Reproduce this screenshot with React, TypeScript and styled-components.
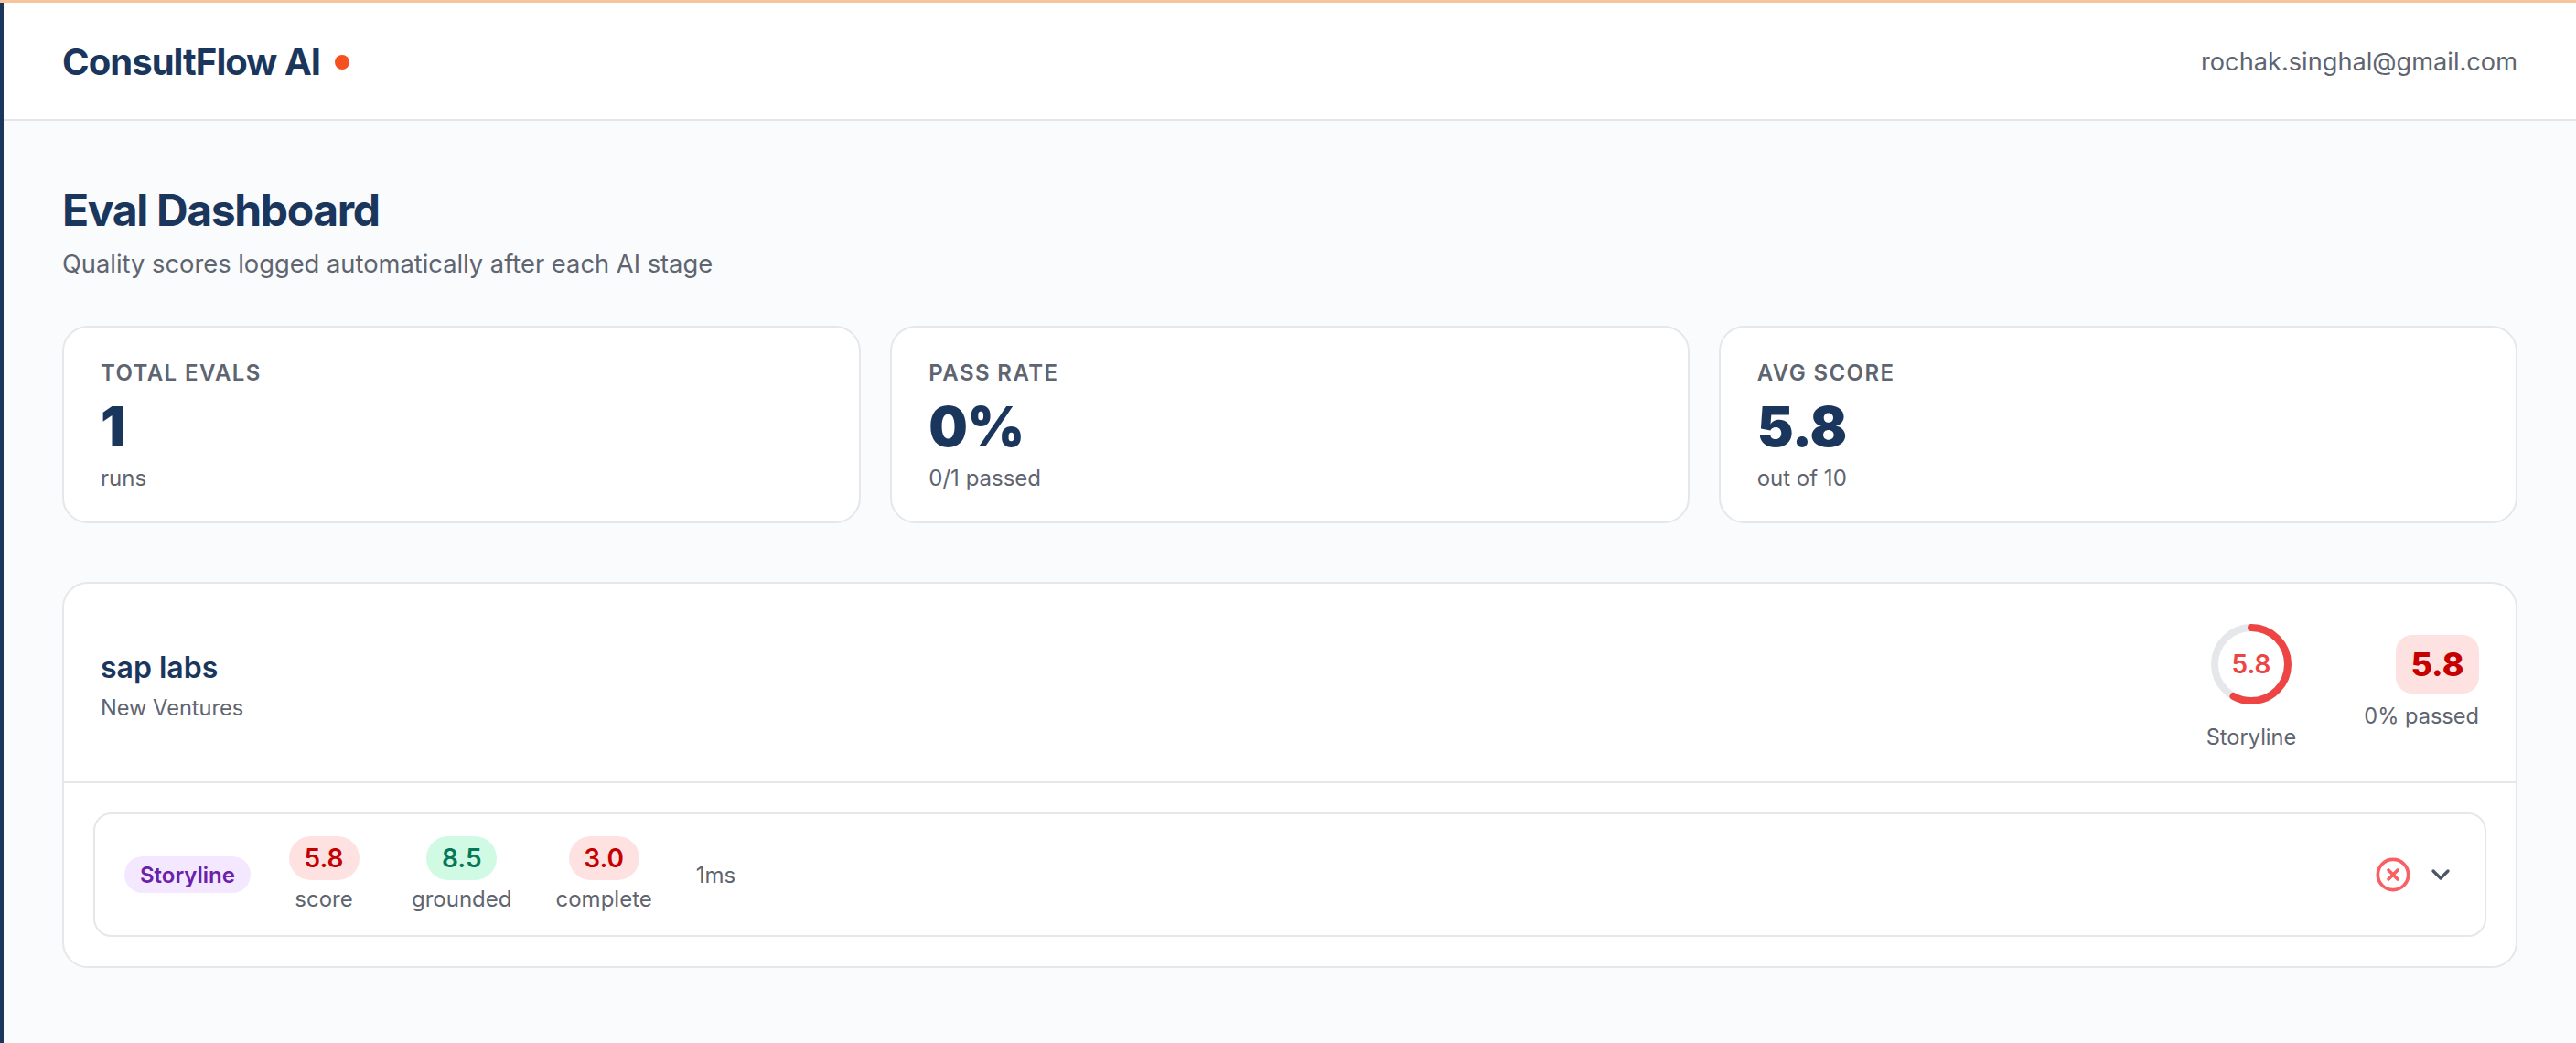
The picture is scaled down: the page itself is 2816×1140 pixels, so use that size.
import * as React from "react";
import styled, { createGlobalStyle } from "styled-components";
import { ChevronDown, CircleX } from "lucide-react";

const GlobalStyle = createGlobalStyle`
  html, body {
    margin: 0;
    padding: 0;
    background: #f9fbfc;
    font-family: Inter, "Liberation Sans", sans-serif;
  }
  * {
    box-sizing: border-box;
  }
`;

const Shell = styled.div`
  min-height: 100vh;
  display: flex;
  flex-direction: column;
  border-top: 3px solid #f8c49a;
`;

const Main = styled.div`
  flex: 1;
  border-left: 4px solid #1a365d;
  background: #f9fbfc;
`;

const Header = styled.header`
  display: flex;
  align-items: center;
  justify-content: space-between;
  height: 129px;
  padding: 2px 64px 0;
  background: #fff;
  border-bottom: 2px solid #e2e6ea;
`;

const Brand = styled.div`
  display: flex;
  align-items: center;
  gap: 16px;
  font-size: 40px;
  font-weight: 700;
  letter-spacing: -0.95px;
  color: #1a365d;
`;

const Dot = styled.span`
  width: 16px;
  height: 16px;
  border-radius: 50%;
  background: #f4511e;
`;

const Email = styled.span`
  font-size: 27.2px;
  color: #5f6570;
`;

const Content = styled.main`
  padding: 70px 64px 0;
`;

const Title = styled.h1`
  margin: 0;
  font-size: 48px;
  line-height: 56px;
  font-weight: 700;
  letter-spacing: -1.36px;
  color: #1a365d;
`;

const Subtitle = styled.p`
  margin: 11px 0 0;
  font-size: 27.3px;
  line-height: 40px;
  color: #5f6570;
`;

const StatGrid = styled.section`
  display: grid;
  grid-template-columns: repeat(3, 1fr);
  gap: 32px;
  margin-top: 47px;
`;

const StatCard = styled.div`
  height: 216px;
  padding: 32px 40px;
  background: #fff;
  border: 2px solid #e5e7eb;
  border-radius: 28px;
`;

const StatLabel = styled.div`
  font-size: 24px;
  line-height: 36px;
  font-weight: 600;
  letter-spacing: 1.4px;
  text-transform: uppercase;
  color: #5f6570;
`;

const StatValue = styled.div`
  margin-top: 4px;
  font-size: 60px;
  line-height: 72px;
  font-weight: 900;
  letter-spacing: -0.6px;
  color: #1a365d;
`;

const StatNote = styled.div`
  margin-top: 3px;
  font-size: 24px;
  line-height: 36px;
  color: #5f6570;
`;

const ClientCard = styled.section`
  margin-top: 64px;
  background: #fff;
  border: 2px solid #e5e7eb;
  border-radius: 28px;
`;

const ClientHead = styled.div`
  display: flex;
  align-items: flex-start;
  justify-content: space-between;
  height: 218px;
  padding: 44px 40px 0;
  border-bottom: 2px solid #e5e7eb;
`;

const ClientInfo = styled.div`
  padding-top: 26px;
`;

const ClientName = styled.div`
  font-size: 32px;
  line-height: 44px;
  font-weight: 600;
  color: #1a365d;
`;

const ClientSub = styled.div`
  margin-top: 4px;
  font-size: 23.6px;
  line-height: 36px;
  color: #5f6570;
`;

const ClientStats = styled.div`
  display: flex;
  align-items: flex-start;
  gap: 74px;
`;

const RingBlock = styled.div`
  display: flex;
  flex-direction: column;
  align-items: center;
  gap: 18px;
`;

const RingWrap = styled.div`
  position: relative;
  width: 88px;
  height: 88px;
`;

const RingText = styled.span`
  position: absolute;
  inset: 0;
  display: flex;
  align-items: center;
  justify-content: center;
  font-size: 28px;
  font-weight: 600;
  color: #ef4444;
`;

const SmallLabel = styled.span`
  font-size: 23.6px;
  line-height: 36px;
  color: #5f6570;
`;

const AvgBlock = styled.div`
  display: flex;
  flex-direction: column;
  align-items: flex-end;
  gap: 7px;
  padding-top: 12px;
`;

const AvgBadge = styled.span`
  display: flex;
  align-items: center;
  justify-content: center;
  width: 91px;
  height: 64px;
  border-radius: 18px;
  background: #fee2e2;
  color: #c50000;
  font-size: 36px;
  font-weight: 800;
`;

const RunList = styled.div`
  padding: 32px;
`;

const RunRow = styled.div`
  display: flex;
  align-items: center;
  height: 136px;
  padding: 0 32px;
  border: 2px solid #e5e7eb;
  border-radius: 20px;
`;

const StagePill = styled.span`
  display: flex;
  align-items: center;
  height: 40px;
  padding: 0 17px;
  border-radius: 20px;
  background: #f3e8ff;
  color: #6b21a8;
  font-size: 24px;
  font-weight: 600;
`;

const Metrics = styled.div`
  display: flex;
  align-items: center;
  gap: 48px;
  margin-left: 32px;
`;

const Metric = styled.div`
  display: flex;
  flex-direction: column;
  align-items: center;
  gap: 3px;
  min-width: 96px;
  padding-top: 3px;
`;

const ScorePill = styled.span<{ $tone: "bad" | "good" }>`
  display: flex;
  align-items: center;
  justify-content: center;
  width: 77px;
  height: 48px;
  border-radius: 24px;
  background: ${(p) => (p.$tone === "good" ? "#d1fae5" : "#fee2e2")};
  color: ${(p) => (p.$tone === "good" ? "#047857" : "#c50000")};
  font-size: 28px;
  font-weight: 600;
`;

const MetricLabel = styled.span`
  font-size: 24px;
  line-height: 36px;
  color: #5f6570;
`;

const Duration = styled.span`
  font-size: 24px;
  color: #5f6570;
`;

const RowEnd = styled.div`
  display: flex;
  align-items: center;
  gap: 16px;
  margin-left: auto;
`;

const FailIcon = styled(CircleX)`
  color: #f86065;
`;

const Chevron = styled(ChevronDown)`
  color: #4b5563;
`;

const stats = [
  { label: "Total Evals", value: "1", note: "runs" },
  { label: "Pass Rate", value: "0%", note: "0/1 passed" },
  { label: "Avg Score", value: "5.8", note: "out of 10" },
];

const metrics: { label: string; value: string; tone: "bad" | "good" }[] = [
  { label: "score", value: "5.8", tone: "bad" },
  { label: "grounded", value: "8.5", tone: "good" },
  { label: "complete", value: "3.0", tone: "bad" },
];

const Ring = ({ score }: { score: number }) => {
  const r = 40;
  const c = 2 * Math.PI * r;
  return (
    <RingWrap>
      <svg width="88" height="88" viewBox="0 0 88 88">
        <circle cx="44" cy="44" r={r} fill="none" stroke="#e5e7eb" strokeWidth="8" />
        <circle
          cx="44"
          cy="44"
          r={r}
          fill="none"
          stroke="#ef4444"
          strokeWidth="8"
          strokeLinecap="round"
          strokeDasharray={`${(c * score) / 10} ${c}`}
          transform="rotate(-90 44 44)"
        />
      </svg>
      <RingText>{score.toFixed(1)}</RingText>
    </RingWrap>
  );
};

export default function App() {
  return (
    <Shell>
      <GlobalStyle />
      <Main>
        <Header>
          <Brand>
            ConsultFlow AI
            <Dot />
          </Brand>
          <Email>rochak.singhal@gmail.com</Email>
        </Header>
        <Content>
          <Title>Eval Dashboard</Title>
          <Subtitle>Quality scores logged automatically after each AI stage</Subtitle>
          <StatGrid>
            {stats.map((s) => (
              <StatCard key={s.label}>
                <StatLabel>{s.label}</StatLabel>
                <StatValue>{s.value}</StatValue>
                <StatNote>{s.note}</StatNote>
              </StatCard>
            ))}
          </StatGrid>
          <ClientCard>
            <ClientHead>
              <ClientInfo>
                <ClientName>sap labs</ClientName>
                <ClientSub>New Ventures</ClientSub>
              </ClientInfo>
              <ClientStats>
                <RingBlock>
                  <Ring score={5.8} />
                  <SmallLabel>Storyline</SmallLabel>
                </RingBlock>
                <AvgBlock>
                  <AvgBadge>5.8</AvgBadge>
                  <SmallLabel>0% passed</SmallLabel>
                </AvgBlock>
              </ClientStats>
            </ClientHead>
            <RunList>
              <RunRow>
                <StagePill>Storyline</StagePill>
                <Metrics>
                  {metrics.map((m) => (
                    <Metric key={m.label}>
                      <ScorePill $tone={m.tone}>{m.value}</ScorePill>
                      <MetricLabel>{m.label}</MetricLabel>
                    </Metric>
                  ))}
                  <Duration>1ms</Duration>
                </Metrics>
                <RowEnd>
                  <FailIcon size={40} strokeWidth={2.2} />
                  <Chevron size={32} strokeWidth={2.5} />
                </RowEnd>
              </RunRow>
            </RunList>
          </ClientCard>
        </Content>
      </Main>
    </Shell>
  );
}
